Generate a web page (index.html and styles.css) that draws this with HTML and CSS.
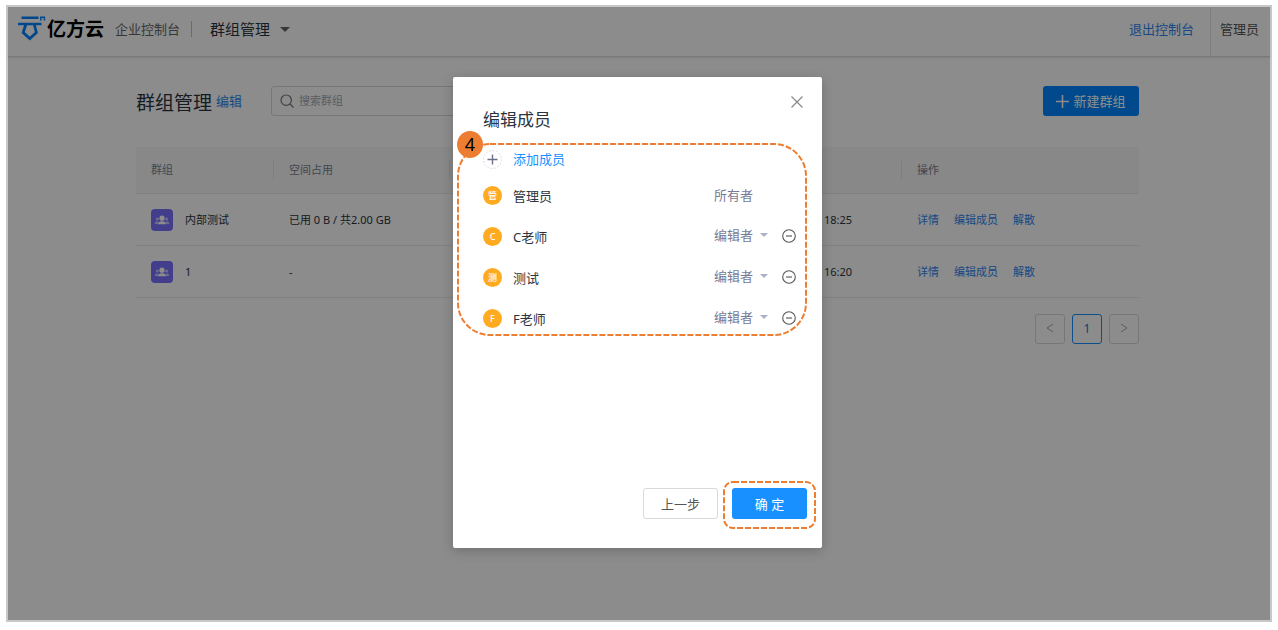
FILE: index.html
```html
<!DOCTYPE html>
<html lang="zh-CN">
<head>
<meta charset="utf-8">
<title>群组管理</title>
<link rel="stylesheet" href="styles.css">
</head>
<body>
<div class="frame">
  <header class="topbar">
    <div class="brand">
      <svg class="brand-mark" viewBox="0 0 28 26" width="28" height="26" fill="none" stroke="#0082ff" stroke-width="2.4" aria-hidden="true">
        <path d="M3.500 2.800h17M0 9h23.500"/>
        <path d="M7.800 9.500L5.200 17.600l6.600 5.900 6.600-5.900L16.300 9.500" stroke-width="2.800"/>
        <path d="M22.800 5.500V2.200h3.600v3.300" stroke-width="1.500"/>
      </svg>
      <span class="brand-name">亿方云</span>
    </div>
    <span class="console">企业控制台</span>
    <button class="section-switch" type="button">群组管理<i class="caret"></i></button>
    <a class="exit" href="#">退出控制台</a>
    <span class="user">管理员</span>
  </header>

  <main class="content">
    <div class="toolbar">
      <h1>群组管理</h1>
      <a class="edit" href="#">编辑</a>
      <label class="search">
        <svg viewBox="0 0 14 14" width="14" height="14" fill="none" stroke="#777" stroke-width="1.200" aria-hidden="true"><circle cx="6.200" cy="6.200" r="5.200"/><path d="M10 10l3.500 3.500"/></svg>
        <input type="search" placeholder="搜索群组" aria-label="搜索群组">
      </label>
      <button class="create" type="button">
        <svg viewBox="0 0 13 13" width="13" height="13" fill="none" stroke="#fff" stroke-width="1.600" aria-hidden="true"><path d="M6.500 0v13M0 6.500h13"/></svg>
        新建群组
      </button>
    </div>

    <table class="groups">
      <colgroup><col class="c-name"><col class="c-space"><col><col class="c-time"><col class="c-actions"></colgroup>
      <thead>
        <tr><th>群组</th><th>空间占用</th><th></th><th></th><th>操作</th></tr>
      </thead>
      <tbody>
        <tr>
          <td><div class="group"><svg class="group-icon" viewBox="0 0 22 22" width="22" height="22" aria-hidden="true"><use href="#people"/></svg>内部测试</div></td>
          <td>已用 0 B / 共2.00 GB</td><td></td><td>18:25</td>
          <td><div class="actions"><a href="#">详情</a><a href="#">编辑成员</a><a href="#">解散</a></div></td>
        </tr>
        <tr>
          <td><div class="group"><svg class="group-icon" viewBox="0 0 22 22" width="22" height="22" aria-hidden="true"><use href="#people"/></svg>1</div></td>
          <td>-</td><td></td><td>16:20</td>
          <td><div class="actions"><a href="#">详情</a><a href="#">编辑成员</a><a href="#">解散</a></div></td>
        </tr>
      </tbody>
    </table>

    <nav class="pager" aria-label="分页">
      <button type="button" aria-label="上一页"><svg viewBox="0 0 8 10" width="8" height="10"><path d="M7 1L1 5l6 4"/></svg></button>
      <button type="button" class="current">1</button>
      <button type="button" aria-label="下一页"><svg viewBox="0 0 8 10" width="8" height="10"><path d="M1 1l6 4-6 4"/></svg></button>
    </nav>
  </main>

  <div class="mask">
    <section class="modal" role="dialog" aria-labelledby="modal-title">
      <button class="close" type="button" aria-label="关闭"><svg viewBox="0 0 12 12" width="12" height="12"><path d="M.5.5l11 11M11.500.5l-11 11"/></svg></button>
      <h2 id="modal-title">编辑成员</h2>
      <button class="add" type="button">
        <svg viewBox="0 0 19 19" width="19" height="19" fill="none" aria-hidden="true"><circle cx="9.500" cy="9.500" r="9" stroke="#d4d4dc" stroke-width=".8" stroke-dasharray="2 1.500"/><path d="M9.500 4.500v10M4.500 9.500h10" stroke="#6b6f8c" stroke-width="1.400"/></svg>
        添加成员
      </button>
      <ul class="members">
        <li><span class="avatar">管</span><span class="name">管理员</span><span class="role">所有者</span></li>
        <li><span class="avatar">C</span><span class="name">C老师</span><button class="role" type="button">编辑者<i class="caret"></i></button><button class="remove" type="button" aria-label="移除C老师"><svg viewBox="0 0 14 14" width="14" height="14"><use href="#minus"/></svg></button></li>
        <li><span class="avatar">测</span><span class="name">测试</span><button class="role" type="button">编辑者<i class="caret"></i></button><button class="remove" type="button" aria-label="移除测试"><svg viewBox="0 0 14 14" width="14" height="14"><use href="#minus"/></svg></button></li>
        <li><span class="avatar">F</span><span class="name">F老师</span><button class="role" type="button">编辑者<i class="caret"></i></button><button class="remove" type="button" aria-label="移除F老师"><svg viewBox="0 0 14 14" width="14" height="14"><use href="#minus"/></svg></button></li>
      </ul>
      <footer>
        <button class="back" type="button">上一步</button>
        <button class="confirm" type="button">确 定</button>
      </footer>
      <svg class="outline outline-members" viewBox="0 0 350 193" width="350" height="193" aria-hidden="true"><rect x="1" y="1" width="348" height="191" rx="32"/></svg>
      <svg class="outline outline-confirm" viewBox="0 0 93 48" width="93" height="48" aria-hidden="true"><rect x="1" y="1" width="91" height="46" rx="9"/></svg>
      <span class="step">4</span>
    </section>
  </div>
</div>

<svg width="0" height="0" class="symbols" aria-hidden="true">
  <symbol id="people" viewBox="0 0 22 22">
    <g fill="#c9c6ff"><circle cx="6.300" cy="10" r="1.500"/><circle cx="15.700" cy="10" r="1.500"/><path d="M3.800 15c0-2 1-2.800 3-2.800v2.800zM18.200 15c0-2-1-2.800-3-2.800v2.800z"/></g>
    <g fill="#fff"><circle cx="11" cy="9.200" r="2.600"/><path d="M6.800 15.300c.2-2.200 1.600-3.100 4.200-3.100s4 .9 4.200 3.100z"/></g>
  </symbol>
  <symbol id="minus" viewBox="0 0 14 14"><g fill="none" stroke="#555" stroke-width="1.100"><circle cx="7" cy="7" r="6.300"/><path d="M4 7h6"/></g></symbol>
</svg>
</body>
</html>
```

FILE: styles.css
```css
* { box-sizing: border-box; }

body {
  margin: 0;
  padding: 5px 6px 8px;
  background: #fff;
  color: #2b3440;
  font: 11px/16px "Noto Sans", "Noto Sans CJK SC", sans-serif;
}

button, input { font: inherit; color: inherit; }
button { padding: 0; border: 0; background: none; cursor: pointer; }
a { color: #2f86f0; text-decoration: none; }
.symbols { position: absolute; }

.frame {
  position: relative;
  min-height: calc(100vh - 13px);
  border: 2px solid #c8c8c8;
  background: #fff;
}

.topbar {
  display: flex;
  align-items: center;
  height: 50px;
  padding: 0 10px 5px;
  border-bottom: 1px solid #dcdcdc;
  box-shadow: 0 1px 2px rgba(0, 0, 0, .1);
  font-size: 13px;
}
.brand { display: flex; align-items: center; gap: 1px; }
.brand-mark { margin-bottom: 3px; }
.brand-name { color: #000; font-size: 19px; line-height: 24px; font-weight: 700; }
.console { margin-left: 11px; padding-right: 11px; border-right: 1px solid #c4c4c4; color: #666; }
.section-switch { display: flex; align-items: center; gap: 10px; margin-left: 18px; font-size: 15px; }
.caret { border: 5px solid transparent; border-top-color: #666; border-bottom: 0; }
.exit { margin-left: auto; padding-right: 16px; }
.user {
  margin-bottom: -5px;
  padding: 0 1px 4px 9px;
  border-left: 1px solid #e6e6e6;
  line-height: 45px;
  color: #555;
}

.content { max-width: 1006px; margin: 0 auto; padding: 29px 3px 0 0; }
.toolbar { display: flex; align-items: center; height: 30px; margin-bottom: 31px; }
h1 { margin: 0; padding-top: 3px; font-size: 19px; line-height: 24px; font-weight: 400; }
.edit { margin-left: 4px; font-size: 13px; }
.search {
  display: flex;
  align-items: center;
  gap: 5px;
  width: 240px;
  height: 30px;
  margin-left: 29px;
  padding: 0 8px;
  border: 1px solid #d9d9d9;
  border-radius: 3px;
}
.search input { flex: 1; min-width: 0; padding: 0; border: 0; outline: 0; background: none; }
.search input::placeholder { color: #a5a8b4; }
.create {
  display: flex;
  align-items: center;
  justify-content: center;
  gap: 4px;
  width: 96px;
  height: 30px;
  margin-left: auto;
  border-radius: 3px;
  background: #0085ff;
  color: #fff;
  font-size: 13px;
}

.groups { width: 100%; table-layout: fixed; border-collapse: separate; border-spacing: 0; }
.c-name { width: 138px; }
.c-space { width: 176px; }
.c-time { width: 93px; }
.c-actions { width: 237px; }
th, td { padding: 0 15px; text-align: left; font-weight: 400; border-bottom: 1px solid #ececec; }
th {
  height: 47px;
  background: linear-gradient(#e6e6e6, #e6e6e6) right center / 1px 18px no-repeat #f8f8f8;
  color: #7b7f8f;
}
th:last-child { background: #f8f8f8; }
td { height: 52px; }
.group { display: flex; align-items: center; gap: 12px; }
.group-icon { border-radius: 4px; background: #7a72ff; }
.actions { display: flex; gap: 15px; }

.pager { display: flex; justify-content: flex-end; gap: 7px; margin-top: 16px; }
.pager button { width: 30px; height: 30px; border: 1px solid #d9d9d9; border-radius: 3px; }
.pager svg { fill: none; stroke: #aaa; }
.pager .current { border-color: #1890ff; color: #1677e8; font-size: 12px; }

.mask {
  position: absolute;
  inset: 0;
  display: flex;
  justify-content: center;
  align-items: flex-start;
  padding: 70px 3px 0 0;
  background: rgba(0, 0, 0, .45);
}
.modal {
  position: relative;
  display: flex;
  flex-direction: column;
  width: 369px;
  min-height: 471px;
  padding: 31px 15px 29px 30px;
  border-radius: 2px;
  background: #fff;
  box-shadow: 0 3px 12px rgba(0, 0, 0, .2);
  font-size: 13px;
}
.close { position: absolute; top: 19px; right: 19px; width: 12px; height: 12px; line-height: 0; }
.close svg { stroke: #888; stroke-width: 1.2; }
h2 { margin: 0; font-size: 17px; line-height: 24px; font-weight: 400; }
.add { display: flex; align-items: center; gap: 11px; height: 20px; margin-top: 17px; color: #1890ff; }
.members { margin: 6px 0 0; padding: 0; list-style: none; }
.members li { display: flex; align-items: center; height: 41px; }
.avatar {
  width: 19px;
  height: 19px;
  margin-right: 11px;
  border-radius: 50%;
  background: #ffab22;
  color: #fff;
  font-size: 9px;
  font-weight: 500;
  line-height: 19px;
  text-align: center;
}
.name { flex: 1; }
.role { display: flex; align-items: center; gap: 7px; width: 68px; padding-bottom: 4px; color: #777b96; }
.role:last-child { margin-right: 25px; padding-bottom: 1px; }
.role .caret { border-width: 4px; border-top-color: #a9b1cb; border-bottom: 0; }
.remove { width: 14px; height: 14px; margin: 0 11px 2px 0; line-height: 0; }
footer { display: flex; justify-content: flex-end; gap: 14px; margin-top: auto; }
footer button { width: 75px; height: 31px; border-radius: 3px; }
.back { border: 1px solid #d9d9d9; color: #555; }
.confirm { background: #1890ff; color: #fff; }

.outline { position: absolute; fill: none; stroke: #ed7d31; stroke-width: 2; stroke-dasharray: 6 2; pointer-events: none; }
.outline-members { left: 4px; top: 66px; }
.outline-confirm { right: 6px; bottom: 19px; }
.step {
  position: absolute;
  left: 4px;
  top: 54px;
  width: 26px;
  height: 27px;
  border-radius: 50%;
  background: #ed7d31;
  color: #000;
  font-size: 18px;
  line-height: 27px;
  text-align: center;
}
```
